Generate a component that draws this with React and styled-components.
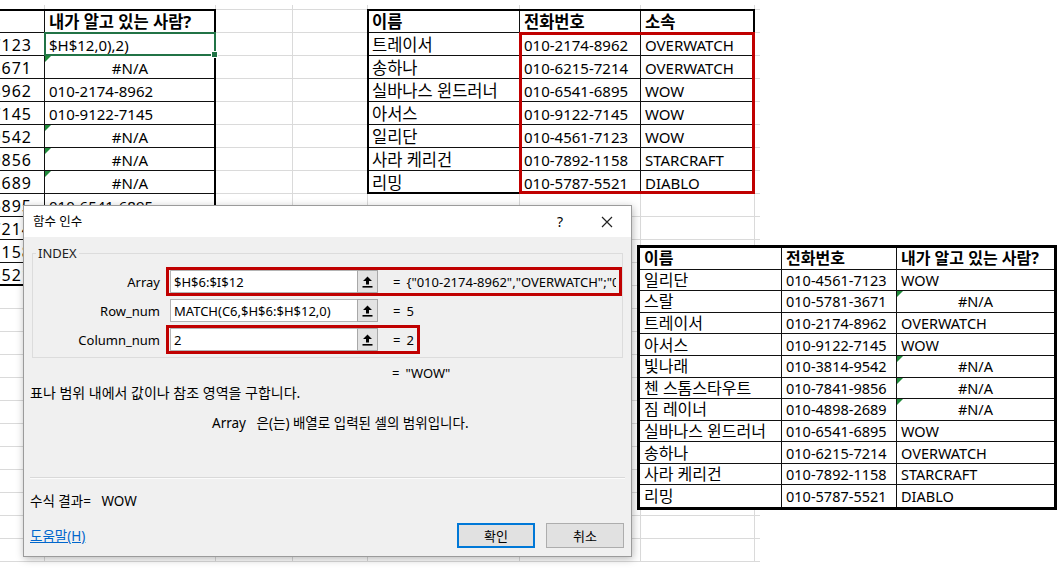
import React from "react";
import styled, { createGlobalStyle, css } from "styled-components";

const NA = "#N/A";
const hasHangul = (t) => /[\uac00-\ud7a3]/.test(t);

const GlobalStyle = createGlobalStyle`
  html, body { margin: 0; padding: 0; background: #fff; }
  body { font-family: "Noto Sans", "Noto Sans CJK KR", sans-serif; color: #000; }
`;

const Canvas = styled.div`
  position: relative;
  width: 1059px;
  height: 569px;
  overflow: hidden;
  background: #fff;
`;

/* pasted sheet screenshot behind the dialog */
const SheetViewport = styled.div`
  position: absolute;
  left: 0;
  top: 5px;
  width: 760px;
  height: 564px;
  overflow: hidden;
`;

const SheetGrid = styled.div`
  display: grid;
  margin-left: -75px;
  grid-template-columns: 120px 171px 77px 75px 152px 121px 114px 60px;
  grid-template-rows: 5px repeat(24, 23px);
  font-size: 15px;
  line-height: 18px;
`;

const flagCss = css`
  &::before {
    content: "";
    position: absolute;
    left: 0;
    top: 0;
    border-top: 6px solid #1f8a3a;
    border-right: 6px solid transparent;
  }
`;

const croppedCss = css`
  padding-right: 12px;
  font-size: 16px;
  letter-spacing: 1px;
`;

const Cell = styled.div`
  grid-row: ${(p) => p.$r + 1};
  grid-column: ${(p) => p.$c + 1};
  position: relative;
  box-sizing: border-box;
  display: flex;
  align-items: center;
  justify-content: ${(p) => p.$justify};
  padding: 2px 4px 0;
  border-right: 1px solid ${(p) => (p.$ink ? "#111" : "#dadada")};
  border-bottom: 1px solid ${(p) => (p.$ink ? "#111" : "#dadada")};
  font-weight: ${(p) => (p.$bold ? 700 : 400)};
  font-size: ${(p) => (p.$ko ? "16.5px" : "15px")};
  white-space: nowrap;
  overflow: hidden;
  ${(p) => p.$justify === "flex-end" && croppedCss}
  ${(p) => p.$flag && flagCss}
`;

const Frame = styled.div`
  grid-column: ${(p) => p.$cols};
  grid-row: ${(p) => p.$rows};
  margin: -1px 0 0 -1px;
  border: ${(p) => p.$w}px solid ${(p) => p.$color};
  pointer-events: none;
  position: relative;
`;

const FillHandle = styled.div`
  position: absolute;
  right: -4px;
  bottom: -4px;
  width: 5px;
  height: 5px;
  background: #217346;
  border: 1px solid #fff;
`;

/* right-hand result table */
const ResultTable = styled.div`
  position: absolute;
  left: 637px;
  top: 245px;
  width: 420px;
  height: 265px;
  box-sizing: border-box;
  border: 3px solid #000;
  background: #fff;
  display: grid;
  grid-template-columns: 142px 115px 1fr;
  grid-template-rows: repeat(12, minmax(0, 1fr));
  line-height: 17px;
`;

const RCell = styled.div`
  position: relative;
  box-sizing: border-box;
  min-height: 0;
  display: flex;
  align-items: center;
  justify-content: ${(p) => (p.$center ? "center" : "flex-start")};
  padding: 1px 4px 0;
  border-right: ${(p) => (p.$lastCol ? "none" : "1px solid #111")};
  border-bottom: ${(p) => (p.$lastRow ? "none" : "1px solid #111")};
  font-weight: ${(p) => (p.$bold ? 700 : 400)};
  font-size: ${(p) => (p.$ko ? "16px" : "14.5px")};
  white-space: nowrap;
  overflow: hidden;
  ${(p) => p.$flag && flagCss}
`;

/* 함수 인수 dialog */
const Dialog = styled.div`
  position: absolute;
  left: 23px;
  top: 205px;
  width: 609px;
  height: 352px;
  box-sizing: border-box;
  border: 1px solid #9b9b9b;
  background: #f0f0f0;
  box-shadow: 1px 2px 8px rgba(0, 0, 0, 0.28);
  display: flex;
  flex-direction: column;
  font-size: 13px;
  line-height: 18px;
`;

const TitleBar = styled.div`
  height: 31px;
  flex-shrink: 0;
  background: #fff;
  display: flex;
  align-items: center;
  justify-content: space-between;
  padding: 0 18px 0 9px;
`;

const Title = styled.span`
  font-size: 12.5px;
`;

const TitleButtons = styled.div`
  display: flex;
  align-items: center;
  gap: 38px;
  font-size: 14px;
`;

const Group = styled.fieldset`
  margin: 7px 8px 0;
  padding: 5px 0 3px;
  min-width: 0;
  border: 1px solid #dcdcdc;
  display: flex;
  flex-direction: column;
`;

const Legend = styled.legend`
  margin-left: 3px;
  padding: 0 2px;
  line-height: 18px;
  color: #222;
`;

const ArgRow = styled.div`
  display: flex;
  align-items: center;
`;

const ArgLabel = styled.span`
  width: 127px;
  flex-shrink: 0;
  margin-right: 6px;
  text-align: right;
`;

const ArgField = styled.div`
  display: flex;
  align-items: center;
  border: 3px solid ${(p) => (p.$hot ? "#c00000" : "transparent")};
  padding: 0 3px 0 1px;
  ${(p) => p.$grow && "flex: 1; min-width: 0;"}
`;

const RefInput = styled.div`
  width: 187px;
  height: 23px;
  flex-shrink: 0;
  box-sizing: border-box;
  border: 1px solid #b4b4b4;
  border-right: none;
  background: #fff;
  padding: 0 3px;
  display: flex;
  align-items: center;
  white-space: nowrap;
  overflow: hidden;
`;

const CollapseButton = styled.div`
  width: 21px;
  height: 23px;
  flex-shrink: 0;
  box-sizing: border-box;
  border: 1px solid #a8a8a8;
  background: #e3e3e3;
  display: flex;
  align-items: center;
  justify-content: center;
`;

const Eq = styled.span`
  margin-left: 15px;
  flex-shrink: 0;
`;

const ArgValue = styled.span`
  margin-left: 6px;
  white-space: nowrap;
  overflow: hidden;
  ${(p) => p.$grow && "flex: 1; min-width: 0;"}
`;

const ResultLine = styled.div`
  display: flex;
  margin-top: 6px;
  padding-left: 353px;
`;

const TextLine = styled.div`
  margin-top: ${(p) => p.$top}px;
  padding-left: ${(p) => p.$left}px;
  font-size: ${(p) => p.$size || 13}px;
  white-space: nowrap;
`;

const Divider = styled.div`
  margin: 45px 6px 0;
  border-top: 1px solid #d9d9d9;
  border-bottom: 1px solid #fbfbfb;
`;

const Footer = styled.div`
  margin-top: 13px;
  padding: 0 7px 0 6px;
  display: flex;
  align-items: center;
  justify-content: space-between;
`;

const HelpLink = styled.span`
  color: #0066cc;
  text-decoration: underline;
  font-size: 13.5px;
`;

const Buttons = styled.div`
  display: flex;
  gap: 11px;
`;

const DlgButton = styled.div`
  width: 78px;
  height: 25px;
  box-sizing: border-box;
  display: flex;
  align-items: center;
  justify-content: center;
  background: #e1e1e1;
  border: ${(p) => (p.$primary ? "2px solid #0078d7" : "1px solid #adadad")};
`;

const UpIcon = () => (
  <svg width="11" height="12" viewBox="0 0 11 12">
    <polygon points="5.5,0.5 10,5 7,5 7,8.5 4,8.5 4,5 1,5" fill="#000" />
    <rect x="0.5" y="10" width="10" height="1.6" fill="#000" />
  </svg>
);

const CloseIcon = () => (
  <svg width="12" height="12" viewBox="0 0 12 12">
    <path d="M1 1 L11 11 M11 1 L1 11" stroke="#222" strokeWidth="1.2" fill="none" />
  </svg>
);

const leftRows = [
  ["010-4561-7123", "$H$12,0),2)"],
  ["010-5781-3671", NA],
  ["010-2174-8962", "010-2174-8962"],
  ["010-9122-7145", "010-9122-7145"],
  ["010-3814-9542", NA],
  ["010-7841-9856", NA],
  ["010-4898-2689", NA],
  ["010-6541-6895", "010-6541-6895"],
  ["010-6215-7214", "010-6215-7214"],
  ["010-7892-1158", "010-7892-1158"],
  ["010-5787-5521", "010-5787-5521"],
];

const sourceRows = [
  ["트레이서", "010-2174-8962", "OVERWATCH"],
  ["송하나", "010-6215-7214", "OVERWATCH"],
  ["실바나스 윈드러너", "010-6541-6895", "WOW"],
  ["아서스", "010-9122-7145", "WOW"],
  ["일리단", "010-4561-7123", "WOW"],
  ["사라 케리건", "010-7892-1158", "STARCRAFT"],
  ["리밍", "010-5787-5521", "DIABLO"],
];

const resultRows = [
  ["이름", "전화번호", "내가 알고 있는 사람?"],
  ["일리단", "010-4561-7123", "WOW"],
  ["스랄", "010-5781-3671", NA],
  ["트레이서", "010-2174-8962", "OVERWATCH"],
  ["아서스", "010-9122-7145", "WOW"],
  ["빛나래", "010-3814-9542", NA],
  ["첸 스톰스타우트", "010-7841-9856", NA],
  ["짐 레이너", "010-4898-2689", NA],
  ["실바나스 윈드러너", "010-6541-6895", "WOW"],
  ["송하나", "010-6215-7214", "OVERWATCH"],
  ["사라 케리건", "010-7892-1158", "STARCRAFT"],
  ["리밍", "010-5787-5521", "DIABLO"],
];

const args = [
  { label: "Array", value: "$H$6:$I$12", result: '{"010-2174-8962","OVERWATCH";"010-6215-7214","OVERWATCH"}', hot: true, grow: true },
  { label: "Row_num", value: "MATCH(C6,$H$6:$H$12,0)", result: "5" },
  { label: "Column_num", value: "2", result: "2", hot: true },
];

function sheetCell(r, c) {
  const cell = { text: "", justify: "flex-start" };
  if (r === 1) {
    if (c === 1) Object.assign(cell, { text: "내가 알고 있는 사람?", bold: true });
    if (c === 4) Object.assign(cell, { text: "이름", bold: true });
    if (c === 5) Object.assign(cell, { text: "전화번호", bold: true });
    if (c === 6) Object.assign(cell, { text: "소속", bold: true });
  }
  if (r >= 2 && r <= 12 && c <= 1) {
    cell.text = leftRows[r - 2][c];
    if (c === 0) cell.justify = "flex-end";
  }
  if (r >= 2 && r <= 8 && c >= 4 && c <= 6) {
    cell.text = sourceRows[r - 2][c - 4];
  }
  cell.ink = (c <= 1 && r >= 1 && r <= 12) || (c >= 4 && c <= 6 && r >= 1 && r <= 8);
  cell.na = cell.text === NA;
  if (cell.na) cell.justify = "center";
  return cell;
}

const ROWS = 25;
const COLS = 8;

export default function App() {
  const cells = [];
  for (let r = 0; r < ROWS; r++) {
    for (let c = 0; c < COLS; c++) {
      const cell = sheetCell(r, c);
      cells.push(
        <Cell
          key={`${r}-${c}`}
          $r={r}
          $c={c}
          $ink={cell.ink}
          $bold={cell.bold}
          $justify={cell.justify}
          $flag={cell.na}
          $ko={hasHangul(cell.text)}
        >
          {cell.text}
        </Cell>
      );
    }
  }

  return (
    <Canvas>
      <GlobalStyle />
      <SheetViewport>
        <SheetGrid>
          {cells}
          <Frame $cols="1 / 3" $rows="2 / 14" $w={2} $color="#000" />
          <Frame $cols="5 / 8" $rows="2 / 10" $w={2} $color="#000" />
          <Frame $cols="6 / 8" $rows="3 / 10" $w={3} $color="#c00000" />
          <Frame $cols="2 / 3" $rows="3 / 4" $w={2} $color="#217346">
            <FillHandle />
          </Frame>
        </SheetGrid>
      </SheetViewport>

      <ResultTable>
        {resultRows.map((row, ri) =>
          row.map((text, ci) => (
            <RCell
              key={`${ri}-${ci}`}
              $bold={ri === 0}
              $center={text === NA}
              $flag={text === NA}
              $ko={hasHangul(text)}
              $lastCol={ci === 2}
              $lastRow={ri === resultRows.length - 1}
            >
              {text}
            </RCell>
          ))
        )}
      </ResultTable>

      <Dialog>
        <TitleBar>
          <Title>함수 인수</Title>
          <TitleButtons>
            <span>?</span>
            <CloseIcon />
          </TitleButtons>
        </TitleBar>
        <Group>
          <Legend>INDEX</Legend>
          {args.map((a) => (
            <ArgRow key={a.label}>
              <ArgLabel>{a.label}</ArgLabel>
              <ArgField $hot={a.hot} $grow={a.grow}>
                <RefInput>{a.value}</RefInput>
                <CollapseButton>
                  <UpIcon />
                </CollapseButton>
                <Eq>=</Eq>
                <ArgValue $grow={a.grow}>{a.result}</ArgValue>
              </ArgField>
            </ArgRow>
          ))}
        </Group>
        <ResultLine>
          <Eq>=</Eq>
          <ArgValue>"WOW"</ArgValue>
        </ResultLine>
        <TextLine $top={2} $left={6} $size={14}>
          표나 범위 내에서 값이나 참조 영역을 구합니다.
        </TextLine>
        <TextLine $top={12} $left={188} $size={13.5}>
          Array&nbsp;&nbsp;&nbsp;은(는) 배열로 입력된 셀의 범위입니다.
        </TextLine>
        <Divider />
        <TextLine $top={13} $left={6} $size={13.5}>
          수식 결과=&nbsp;&nbsp;&nbsp;WOW
        </TextLine>
        <Footer>
          <HelpLink>도움말(H)</HelpLink>
          <Buttons>
            <DlgButton $primary>확인</DlgButton>
            <DlgButton>취소</DlgButton>
          </Buttons>
        </Footer>
      </Dialog>
    </Canvas>
  );
}
